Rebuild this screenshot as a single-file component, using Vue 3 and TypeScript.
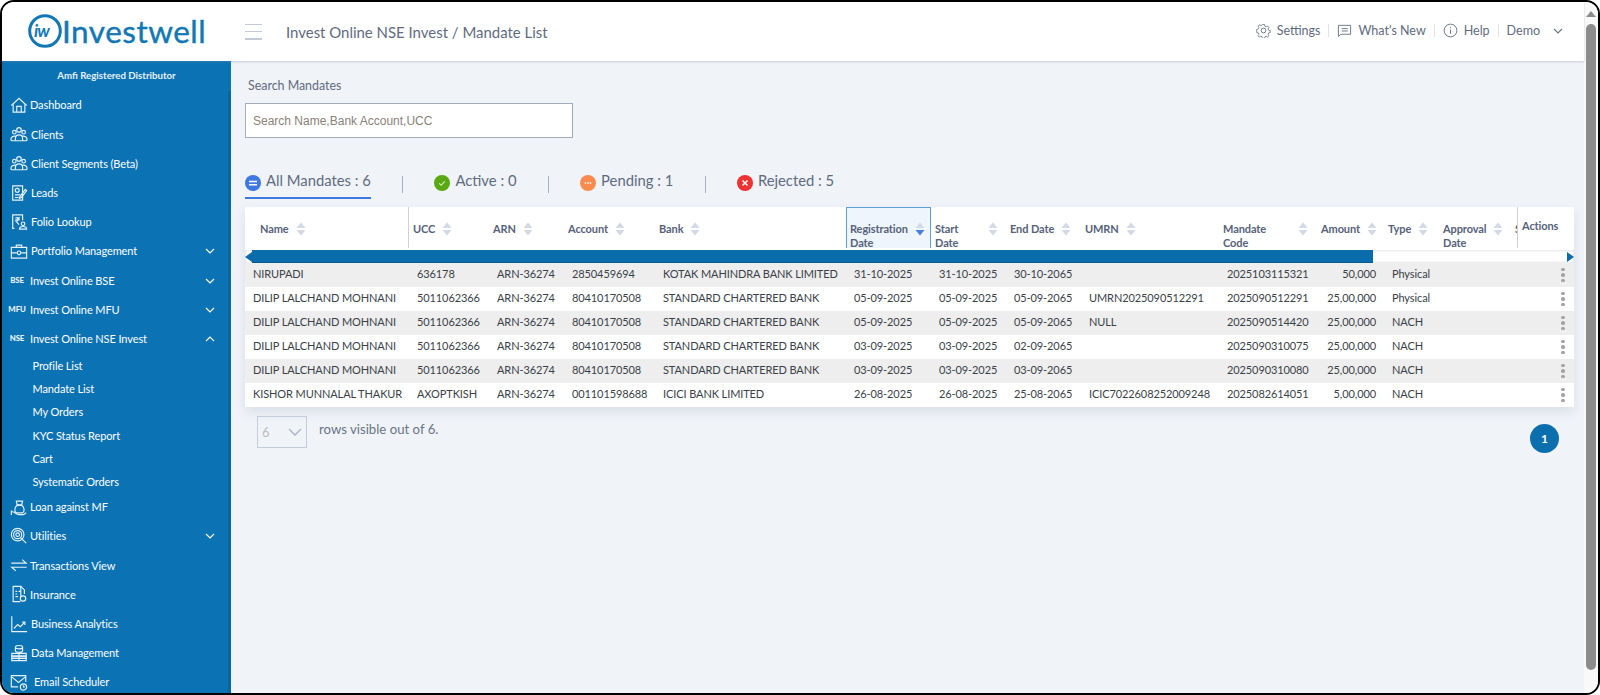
<script setup lang="ts">
import { ref } from 'vue'

interface NavItem {
  label: string
  icon?: string[]
  badge?: string
  chevron?: 'up' | 'down'
  nudge?: 'n1' | 'n4'
  children?: string[]
}
interface Col {
  key: string
  lines: string[]
  cls?: string
  sort?: boolean
  wide?: boolean
  active?: boolean
}
interface Row {
  name: string
  ucc: string
  account: string
  bank: string
  reg: string
  start: string
  end: string
  umrn: string
  code: string
  amount: string
  type: string
}

const circle = (cx: number, cy: number, r: number) =>
  `M${cx - r} ${cy}a${r} ${r} 0 1 0 ${2 * r} 0a${r} ${r} 0 1 0 ${-2 * r} 0`

const group = [
  circle(10, 5.500, 2.500),
  circle(4.800, 8, 2),
  circle(15.200, 8, 2),
  'M6.500 12.500c-3-.6-5.500.8-5.500 3.500 0 1 .6 1.500 1.500 1.500h15c.9 0 1.500-.5 1.500-1.500 0-2.700-2.500-4.100-5.500-3.500',
  'M6 17.500v-2.500c0-2.500 1.800-4 4-4s4 1.500 4 4v2.500'
]

const nav: NavItem[] = [
  { label: 'Dashboard', icon: ['M1.500 10.500 10 2.500l8.500 8', 'M3.500 9.500V18h13V9.500', 'M7.500 18v-6.500h5V18'] },
  { label: 'Clients', icon: group, nudge: 'n1' },
  { label: 'Client Segments (Beta)', icon: group, nudge: 'n1' },
  { label: 'Leads', icon: ['M3 2h11v16H3z', circle(8, 7, 2.200), 'M5.500 12h6', 'M5.500 15h4', 'M11 14l6-8 1.500 1.200-6 8-2 .8z'], nudge: 'n1' },
  { label: 'Folio Lookup', icon: ['M5 17H3V2h11v6', 'M6 5.500h5', 'M6 7.500h5', 'M8 5.500c2 0 2 3.500-1.500 3.500L10 13', circle(14.500, 12, 2), 'M10.500 18c0-2 1.500-3 4-3s4 1 4 3z'], nudge: 'n1' },
  { label: 'Portfolio Management', icon: ['M1.500 6h17v12h-17z', 'M7 6V3.500h6V6', 'M1.500 12h6', 'M12.500 12h6', circle(10, 12, 2)], chevron: 'down', nudge: 'n1' },
  { label: 'Invest Online BSE', badge: 'BSE', chevron: 'down' },
  { label: 'Invest Online MFU', badge: 'MFU', chevron: 'down' },
  {
    label: 'Invest Online NSE Invest',
    badge: 'NSE',
    chevron: 'up',
    children: ['Profile List', 'Mandate List', 'My Orders', 'KYC Status Report', 'Cart', 'Systematic Orders']
  },
  { label: 'Loan against MF', icon: ['M8 8C5 10 4.500 15 7 16.500h7c2.500-1.500 2-6.500-1-8.500z', 'M8 8 7 3.500h7L13 8z', 'M8.500 8h4', 'M1.500 14v5', 'M1.500 15.500C5 14 6 18.500 10 18.500h5l3-2'] },
  { label: 'Utilities', icon: [circle(8.500, 8.500, 7), circle(8.500, 8.500, 4.500), circle(8.500, 8.500, 2), 'M12 12l6 6'], chevron: 'down' },
  { label: 'Transactions View', icon: ['M1.500 8H18l-4.500-4', 'M18.500 12.500H2l4.500 4'] },
  { label: 'Insurance', icon: ['M12 13V1.500H3.500v17h8', 'M12 1.500l4 4V10', 'M6 7h2', 'M9.500 7H12', 'M6 10h2', 'M6 13h3', circle(14.500, 15, 3)] },
  { label: 'Business Analytics', icon: ['M2 1.500V18.500h17', 'M4.500 15l4-4.500 3 2.500 5-5', 'M13.500 8h3v3'], nudge: 'n1' },
  { label: 'Data Management', icon: ['M6 3.500c0-2.500 8-2.500 8 0v4c0 2.500-8 2.500-8 0z', 'M6 3.500c0 2.500 8 2.500 8 0', 'M2 10.500h16v3H2z', 'M2 13.500h16v2.500H2z', 'M2 16h16v2.500H2z', 'M10 10.500v8'], nudge: 'n1' },
  { label: 'Email Scheduler', icon: ['M9 15.500H1.500V3h16v7', 'M1.500 4 9.500 10.500 17.500 4', circle(15, 15.500, 3.500), 'M15 13.500v2h1.500'], nudge: 'n4' }
]

const cols: Col[] = [
  { key: 'name', lines: ['Name'], cls: 'c-name', sort: true },
  { key: 'ucc', lines: ['UCC'], sort: true },
  { key: 'arn', lines: ['ARN'], sort: true },
  { key: 'account', lines: ['Account'], sort: true },
  { key: 'bank', lines: ['Bank'], sort: true },
  { key: 'reg', lines: ['Registration', 'Date'], sort: true, wide: true, active: true, cls: 'c-reg' },
  { key: 'start', lines: ['Start', 'Date'], sort: true, wide: true, cls: 'c-start' },
  { key: 'end', lines: ['End Date'], sort: true },
  { key: 'umrn', lines: ['UMRN'], sort: true },
  { key: 'code', lines: ['Mandate', 'Code'], sort: true, wide: true, cls: 'c-code' },
  { key: 'amount', lines: ['Amount'], sort: true },
  { key: 'type', lines: ['Type'], sort: true },
  { key: 'approval', lines: ['Approval', 'Date'], sort: true, wide: true, cls: 'c-approval' },
  { key: 'status', lines: ['Status'], cls: 'c-clip' },
  { key: 'actions', lines: ['Actions'], cls: 'c-actions' }
]

const rows: Row[] = [
  { name: 'NIRUPADI', ucc: '636178', account: '2850459694', bank: 'KOTAK MAHINDRA BANK LIMITED', reg: '31-10-2025', start: '31-10-2025', end: '30-10-2065', umrn: '', code: '2025103115321', amount: '50,000', type: 'Physical' },
  { name: 'DILIP LALCHAND MOHNANI', ucc: '5011062366', account: '80410170508', bank: 'STANDARD CHARTERED BANK', reg: '05-09-2025', start: '05-09-2025', end: '05-09-2065', umrn: 'UMRN2025090512291', code: '2025090512291', amount: '25,00,000', type: 'Physical' },
  { name: 'DILIP LALCHAND MOHNANI', ucc: '5011062366', account: '80410170508', bank: 'STANDARD CHARTERED BANK', reg: '05-09-2025', start: '05-09-2025', end: '05-09-2065', umrn: 'NULL', code: '2025090514420', amount: '25,00,000', type: 'NACH' },
  { name: 'DILIP LALCHAND MOHNANI', ucc: '5011062366', account: '80410170508', bank: 'STANDARD CHARTERED BANK', reg: '03-09-2025', start: '03-09-2025', end: '02-09-2065', umrn: '', code: '2025090310075', amount: '25,00,000', type: 'NACH' },
  { name: 'DILIP LALCHAND MOHNANI', ucc: '5011062366', account: '80410170508', bank: 'STANDARD CHARTERED BANK', reg: '03-09-2025', start: '03-09-2025', end: '03-09-2065', umrn: '', code: '2025090310080', amount: '25,00,000', type: 'NACH' },
  { name: 'KISHOR MUNNALAL THAKUR', ucc: 'AXOPTKISH', account: '001101598688', bank: 'ICICI BANK LIMITED', reg: '26-08-2025', start: '26-08-2025', end: '25-08-2065', umrn: 'ICIC7022608252009248', code: '2025082614051', amount: '5,00,000', type: 'NACH' }
]

const query = ref('')
</script>

<template>
  <div class="frame">
    <div class="page">
      <header class="topbar">
        <div class="logo">
          <svg class="logo-mark" viewBox="0 0 34 34" width="34" height="34">
            <circle cx="17" cy="17" r="15.300" fill="none" stroke="#1277b5" stroke-width="3" />
            <text x="6" y="23" class="logo-iw">iw</text>
          </svg>
          <span class="logo-text">Investwell</span>
        </div>
        <button class="burger" aria-label="Menu"><i></i><i></i><i></i></button>
        <div class="crumb">Invest Online NSE Invest / Mandate List</div>
        <nav class="top-links">
          <a class="top-link">
            <svg viewBox="0 0 16 16" width="15" height="15" fill="none" stroke="#6a7488" stroke-width="1">
              <circle cx="8" cy="8" r="2.500" />
              <path d="M6.800 1h2.400l.4 2 1.500.7 1.800-1 1.600 1.700-1.100 1.700.6 1.500 2 .5v2.300l-2 .5-.6 1.500 1.100 1.700-1.600 1.600-1.800-1-1.500.7-.4 2H6.800l-.4-2-1.500-.7-1.800 1-1.600-1.600 1.100-1.700-.6-1.500-2-.5V6.600l2-.5.6-1.500L1.500 2.900 3.100 1.200l1.800 1 1.500-.7z" transform="translate(.8 .8) scale(.9)" />
            </svg>
            Settings
          </a>
          <span class="vsep"></span>
          <a class="top-link">
            <svg viewBox="0 0 16 16" width="15" height="15" fill="none" stroke="#6a7488" stroke-width="1">
              <path d="M1.500 2.500h13v9.500H4l-2.500 2.500z" />
              <path d="M5 6h6.500M5 8.500h6.500" />
            </svg>
            What's New
          </a>
          <span class="vsep"></span>
          <a class="top-link">
            <svg viewBox="0 0 16 16" width="15" height="15" fill="none" stroke="#6a7488" stroke-width="1">
              <circle cx="8" cy="8" r="6.800" />
              <path d="M8 7v4.500M8 4.500v1.200" />
            </svg>
            Help
          </a>
          <span class="vsep"></span>
          <a class="top-link demo">Demo</a>
          <svg class="demo-chev" viewBox="0 0 10 6" width="10" height="6" fill="none" stroke="#6a7488" stroke-width="1.100">
            <path d="M1 1l4 4 4-4" />
          </svg>
        </nav>
      </header>

      <div class="body">
        <aside class="sidebar">
          <div class="side-title">Amfi Registered Distributor</div>
          <ul class="side-list">
            <li v-for="item in nav" :key="item.label">
              <div class="side-item">
                <span v-if="item.badge" class="badge">{{ item.badge }}</span>
                <svg v-else class="side-icon" viewBox="0 0 20 20" width="18" height="18" fill="none" stroke="#e8f2f9" stroke-width="1.300">
                  <path v-for="d in item.icon" :key="d" :d="d" />
                </svg>
                <span class="side-label" :class="item.nudge">{{ item.label }}</span>
                <svg v-if="item.chevron" class="side-chev" :class="{ up: item.chevron === 'up' }" viewBox="0 0 10 6" width="10" height="6" fill="none" stroke="#fff" stroke-width="1.200">
                  <path d="M1 1l4 4 4-4" />
                </svg>
              </div>
              <ul v-if="item.children" class="side-sub">
                <li v-for="c in item.children" :key="c">{{ c }}</li>
              </ul>
            </li>
          </ul>
          <span class="side-scroll"></span>
        </aside>

        <main class="main">
          <label class="search-label" for="mandate-search">Search Mandates</label>
          <input id="mandate-search" v-model="query" class="search" placeholder="Search Name,Bank Account,UCC" />

          <div class="tabs">
            <div class="tab current">
              <svg viewBox="0 0 16 16" width="16" height="16">
                <circle cx="8" cy="8" r="8" fill="#3f78e0" />
                <path d="M4 6.500h8M4 9.700h8" stroke="#fff" stroke-width="1.600" />
              </svg>
              <span>All Mandates : 6</span>
            </div>
            <span class="tab-sep"></span>
            <div class="tab">
              <svg viewBox="0 0 16 16" width="16" height="16">
                <circle cx="8" cy="8" r="8" fill="#5aa913" />
                <path d="M5.200 8.300l2 2 3.600-4" stroke="#d8efc4" stroke-width="1.100" fill="none" />
              </svg>
              <span>Active : 0</span>
            </div>
            <span class="tab-sep"></span>
            <div class="tab">
              <svg viewBox="0 0 16 16" width="16" height="16">
                <circle cx="8" cy="8" r="8" fill="#f98b4f" />
                <path d="M4.700 8h6.600" stroke="#fff" stroke-width="1.400" stroke-dasharray="1.500 1" />
              </svg>
              <span>Pending : 1</span>
            </div>
            <span class="tab-sep"></span>
            <div class="tab">
              <svg viewBox="0 0 16 16" width="16" height="16">
                <circle cx="8" cy="8" r="8" fill="#ee3131" />
                <path d="M5.500 5.500l5 5M10.500 5.500l-5 5" stroke="#fff" stroke-width="1.500" />
              </svg>
              <span>Rejected : 5</span>
            </div>
          </div>

          <section class="table">
            <div class="grid head">
              <div v-for="c in cols" :key="c.key" class="th" :class="[c.cls, { wide: c.wide, active: c.active }]">
                <span class="th-label"><template v-for="(l, i) in c.lines" :key="l">{{ l }}<br v-if="i < c.lines.length - 1" /></template></span>
                <svg v-if="c.sort" class="sort" viewBox="0 0 10 14" width="10" height="14">
                  <path d="M5 0.500l4.500 5.500h-9z" fill="#d3dae5" />
                  <path d="M5 13.500l4.500-5.500h-9z" :fill="c.active ? '#4a7fdc' : '#d3dae5'" />
                </svg>
              </div>
            </div>

            <div class="hscroll">
              <span class="hs-left"></span>
              <span class="hs-thumb"></span>
              <span class="hs-right"></span>
            </div>

            <div v-for="(r, idx) in rows" :key="idx" class="grid row" :class="{ odd: idx % 2 === 0 }">
              <div class="td">{{ r.name }}</div>
              <div class="td">{{ r.ucc }}</div>
              <div class="td">ARN-36274</div>
              <div class="td">{{ r.account }}</div>
              <div class="td">{{ r.bank }}</div>
              <div class="td">{{ r.reg }}</div>
              <div class="td">{{ r.start }}</div>
              <div class="td">{{ r.end }}</div>
              <div class="td">{{ r.umrn }}</div>
              <div class="td">{{ r.code }}</div>
              <div class="td num">{{ r.amount }}</div>
              <div class="td">{{ r.type }}</div>
              <div class="td"></div>
              <div class="td"></div>
              <div class="td dots"><i></i><i></i><i></i></div>
            </div>
          </section>

          <div class="pager">
            <div class="rows-select">
              <span>6</span>
              <svg viewBox="0 0 14 8" width="14" height="8" fill="none" stroke="#a9b1c2" stroke-width="1.300">
                <path d="M1 1l6 6 6-6" />
              </svg>
            </div>
            <span class="rows-text">rows visible out of 6.</span>
            <span class="page-dot">1</span>
          </div>
        </main>
      </div>
    </div>

    <div class="vscroll">
      <span class="vs-arrow"></span>
      <span class="vs-thumb"></span>
    </div>
  </div>
</template>

<style>
html,
body {
  margin: 0;
  background: #fff;
}
</style>

<style scoped>
* {
  box-sizing: border-box;
}
.frame {
  width: 1600px;
  height: 695px;
  border: 2px solid #000;
  border-radius: 14px;
  overflow: hidden;
  display: flex;
  font-family: Lato, "Open Sans", "Liberation Sans", sans-serif;
  color: #5f6b80;
  background: #f8f8f8;
}
.page {
  width: 1582px;
  display: flex;
  flex-direction: column;
  height: 100%;
}
.topbar {
  height: 59px;
  flex: none;
  background: #fff;
  display: flex;
  align-items: center;
  position: relative;
  z-index: 2;
  box-shadow: 0 1px 2px rgba(120, 135, 165, 0.35);
}
.logo {
  width: 243px;
  padding-left: 26px;
  display: flex;
  align-items: center;
  flex: none;
}
.logo-mark {
  flex: none;
  margin-top: -1px;
}
.logo-iw {
  font: italic 700 17px Lato, sans-serif;
  fill: #1277b5;
  letter-spacing: -1px;
}
.logo-text {
  font-size: 31.500px;
  line-height: 36px;
  color: #1277b5;
  letter-spacing: 0.5px;
  margin-top: -1px;
  -webkit-text-stroke: 0.4px #1277b5;
}
.burger {
  width: 17px;
  height: 16px;
  padding: 0;
  border: 0;
  background: none;
  display: flex;
  flex-direction: column;
  justify-content: space-between;
  flex: none;
}
.burger i {
  display: block;
  height: 1.500px;
  background: #c2cad6;
}
.crumb {
  margin-left: 24px;
  font-size: 14.950px;
  color: #5f6b80;
  margin-top: 1px;
}
.top-links {
  margin-left: auto;
  display: flex;
  align-items: center;
  padding-right: 21px;
  margin-top: -2px;
}
.top-link {
  display: flex;
  align-items: center;
  gap: 5px;
  font-size: 12.500px;
  color: #5f6b80;
}
.vsep {
  width: 1px;
  height: 13px;
  background: #dfe3ea;
  margin: 0 8px;
}
.top-link svg {
  margin-right: 1px;
}
.demo-chev {
  margin-left: 13px;
  margin-right: 0;
}
.body {
  flex: 1;
  display: flex;
  min-height: 0;
}
.sidebar {
  width: 229px;
  flex: none;
  background: #0b72b3;
  color: #fff;
  position: relative;
  overflow: hidden;
}
.side-title {
  height: 29.400px;
  padding-top: 7px;
  text-align: center;
  font-size: 9.700px;
  font-weight: 700;
  line-height: 14px;
  color: #e6f1f8;
}
.side-list,
.side-sub {
  list-style: none;
  margin: 0;
  padding: 0;
}
.side-item {
  height: 29.200px;
  display: flex;
  align-items: center;
  padding-left: 8px;
  font-size: 11px;
  letter-spacing: -0.1px;
  position: relative;
}
.side-icon {
  flex: none;
  width: 18px;
  margin-right: 2px;
}
.badge {
  width: 18px;
  margin: 0 4px 0 -2px;
  font-size: 7.800px;
  font-weight: 900;
  text-align: center;
  white-space: nowrap;
  color: #e8f2f9;
  letter-spacing: -0.1px;
  flex: none;
}
.side-label {
  white-space: nowrap;
}
.n1 {
  margin-left: 1px;
}
.n4 {
  margin-left: 4px;
}
.side-chev {
  position: absolute;
  left: 203px;
  top: 12px;
}
.side-chev.up {
  transform: rotate(180deg);
}
.side-sub {
  padding-top: 1px;
  margin-bottom: -1px;
}
.side-sub li {
  height: 23.200px;
  line-height: 23.200px;
  padding-left: 30.500px;
  font-size: 11px;
  letter-spacing: -0.1px;
  white-space: nowrap;
}
.side-scroll {
  position: absolute;
  right: 0;
  top: 30px;
  bottom: 0;
  width: 3px;
  background: #0a65a0;
}
.main {
  flex: 1;
  min-width: 0;
  background: #f0f3f8;
  padding: 16px 10px 0 14px;
  display: flex;
  flex-direction: column;
  align-items: flex-start;
}
.search-label {
  font-size: 12.400px;
  line-height: 18px;
  margin-left: 3px;
  color: #5f6b80;
}
.search {
  width: 328px;
  height: 35px;
  margin-top: 8px;
  padding: 0 7px;
  border: 1px solid #a4acb9;
  background: #fff;
  outline: 0;
  font: 12px "Liberation Sans", Arial, sans-serif;
  color: #555;
}
.search::placeholder {
  color: #8a8178;
  opacity: 1;
}
.tabs {
  margin-top: 32px;
  height: 29px;
  display: flex;
  align-items: flex-start;
  gap: 31.300px;
}
.tab {
  height: 29px;
  display: flex;
  align-items: flex-start;
  gap: 5px;
  font-size: 14.800px;
  line-height: 21px;
  color: #5f6b80;
  white-space: nowrap;
}
.tab svg {
  margin-top: 5px;
  flex: none;
}
.tab.current {
  border-bottom: 2px solid #3f78e0;
}
.tab-sep {
  width: 1px;
  height: 17px;
  background: #a9b1bd;
  margin-top: 6px;
}
.table {
  margin-top: 8px;
  width: 1329px;
  box-shadow: 0 5px 10px rgba(120, 135, 165, 0.18);
}
.grid {
  display: grid;
  grid-template-columns: 164px 80px 75px 91px 191px 85px 75px 75px 138px 98px 67px 55px 74px 4px 57px;
}
.head {
  height: 43px;
  background: #fff;
}
.th {
  display: flex;
  align-items: flex-start;
  gap: 7px;
  padding: 15px 0 0 4px;
  font-size: 11px;
  font-weight: 700;
  letter-spacing: -0.1px;
  line-height: 13.500px;
  color: #56627a;
  overflow: hidden;
  min-width: 0;
  white-space: nowrap;
}
.sort {
  flex: none;
  margin-top: 0;
}
.th.wide {
  justify-content: space-between;
}
.c-name {
  padding-left: 15px;
  border-right: 1px solid #d0d0d0;
  margin-bottom: 2px;
}
.c-reg {
  padding-right: 8px;
}
.c-start {
  padding-right: 8px;
}
.c-code {
  padding-right: 9px;
}
.c-approval {
  padding-right: 11px;
}
.c-clip {
  padding-left: 2px;
}
.c-actions {
  border-left: 1px solid #d0d0d0;
  padding-top: 12px;
  margin-bottom: 2px;
}
.th.active {
  background: #eef5fd;
  border: 1px solid #5f9fd6;
  border-bottom: 0;
  padding: 14px 8px 0 3px;
  margin-bottom: 2px;
}
.hscroll {
  height: 13px;
  display: flex;
  align-items: stretch;
  background: #fff;
  position: relative;
  box-shadow: inset 0 0 3px rgba(120, 135, 165, 0.4);
}
.hs-left,
.hs-right {
  width: 0;
  height: 0;
  border-top: 5px solid transparent;
  border-bottom: 5px solid transparent;
  align-self: center;
  flex: none;
}
.hs-left {
  border-right: 7px solid #0b6cab;
}
.hs-right {
  border-left: 7px solid #0b6cab;
  margin-left: auto;
}
.hs-thumb {
  width: 1121px;
  background: #0b6cab;
  box-shadow: inset 0 -1px 1px rgba(0, 0, 0, 0.18);
}
.row {
  height: 24px;
  background: #fff;
  font-size: 11px;
  letter-spacing: -0.1px;
  color: #3a3f48;
}
.row.odd {
  background: #eeeeee;
}
.td {
  padding-left: 8px;
  line-height: 22px;
  white-space: nowrap;
  overflow: visible;
  min-width: 0;
}
.num {
  padding: 0 8px 0 0;
  text-align: right;
}
.dots {
  padding: 0 0 0 44px;
  display: flex;
  flex-direction: column;
  justify-content: center;
  gap: 2px;
}
.dots i {
  display: block;
  width: 3.500px;
  height: 3.500px;
  border-radius: 50%;
  background: #a3a3a3;
}
.pager {
  width: 1329px;
  display: flex;
  align-items: flex-start;
  padding: 9px 0 0 12px;
  position: relative;
}
.rows-select {
  width: 50px;
  height: 32px;
  border: 1px solid #c4cbdd;
  display: flex;
  align-items: center;
  justify-content: space-between;
  padding: 0 4px 0 4px;
  font-size: 13px;
  color: #b9bcc2;
}
.rows-text {
  margin-left: 12px;
  font-size: 13.200px;
  line-height: 26px;
  color: #6b7486;
}
.page-dot {
  position: absolute;
  left: 1285px;
  top: 17px;
  width: 29px;
  height: 29px;
  border-radius: 50%;
  background: #0b6fae;
  color: #fff;
  font-size: 12px;
  font-weight: 700;
  text-align: center;
  line-height: 29px;
}
.vscroll {
  width: 14px;
  flex: none;
  padding: 9px 2px 0 2px;
  display: flex;
  flex-direction: column;
  align-items: center;
  background: #f9f9f9;
}
.vs-arrow {
  width: 0;
  height: 0;
  border-left: 5px solid transparent;
  border-right: 5px solid transparent;
  border-bottom: 6px solid #8c8c8c;
}
.vs-thumb {
  width: 10px;
  height: 646px;
  margin-top: 7px;
  background: #8c8c8c;
  border-radius: 5px;
}
</style>
